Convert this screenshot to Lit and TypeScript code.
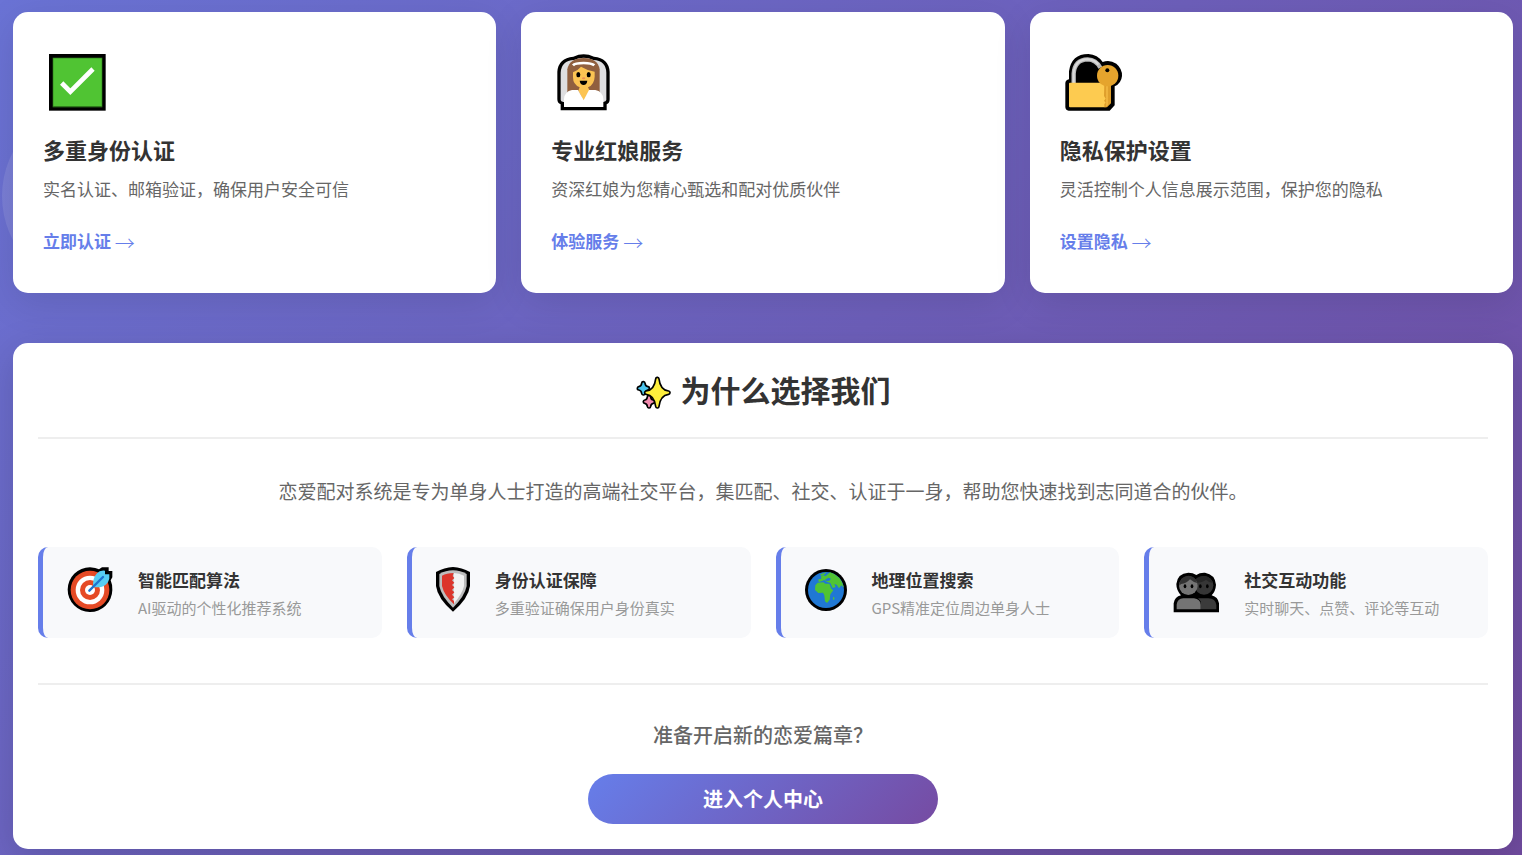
import { LitElement, html, css, svg } from "lit";
import { customElement } from "lit/decorators.js";

const checkIcon = html`<svg class="card-icon" viewBox="129 126 240 240" aria-hidden="true">
  <rect x="147" y="162" width="170" height="170" fill="#000"/>
  <rect x="158" y="173" width="149" height="149" fill="#2f7a1c"/>
  <rect x="160" y="175" width="145" height="143" fill="#50c433"/>
  <path d="M185 249 L211 275 L279 207" fill="none" stroke="#fff" stroke-width="14"/>
</svg>`;

const brideIcon = html`<svg class="card-icon" viewBox="33 6 240 240" aria-hidden="true">
  <path d="M62 211 V193 Q52 190 52 178 V95 Q55 54 100 50 Q131 36 162 50 Q206 54 209 95 V178 Q209 190 200 193 V211 Z" fill="#000"/>
  <path d="M62 180 V98 Q64 62 102 60 Q131 46 160 60 Q198 62 199 98 V180 Q198 185 190 186 H70 Q62 185 62 180 Z" fill="#dedee0"/>
  <path d="M82 170 V88 Q88 55 131 54 Q174 55 179 88 V170 Z" fill="#91603f"/>
  <path d="M99 97 Q112 93 123 80 Q143 92 164 95 V110 Q163 134 144 142 L149 152 L131 182 L115 152 L119 142 Q99 134 99 112 Z" fill="#fcc453"/>
  <path d="M72 201 V177 Q74 154 96 150 L114 150 L131 181 L147 150 L166 150 Q188 154 190 177 V201 Z" fill="#fff"/>
  <path d="M99 76 Q105 69 131 69 Q155 69 163 76" fill="none" stroke="#fff" stroke-width="8"/>
  <ellipse cx="115" cy="104" rx="6" ry="8"/><ellipse cx="146" cy="104" rx="6" ry="8"/>
  <ellipse cx="131" cy="115" rx="5" ry="3" fill="#ef8d55"/>
  <path d="M119 122 H142 Q140 135 131 135 Q121 135 119 122Z"/>
</svg>`;

const lockIcon = html`<svg class="card-icon" viewBox="29 6 240 240" aria-hidden="true">
  <path d="M55 212 Q45 210 45 201 V129 Q46 120 56 118 V94 Q63 42 114 42 Q142 44 157 66 Q178 58 198 71 Q216 86 215 108 Q213 130 193 139 V196 L178 212 Z" fill="#000"/>
  <path d="M70 136 V101 Q73 59 112 58 Q137 59 150 83" fill="none" stroke="#b9b9b9" stroke-width="13"/>
  <path d="M70 132 V101 Q73 59 112 58 Q133 59 144 74" fill="none" stroke="#dadada" stroke-width="6"/>
  <rect x="56" y="128" width="112" height="74" rx="3" fill="#fdcb50"/>
  <path d="M162 130 H182 V190 L170 202 H162 V192 L166 188 L161 182 L166 176 L161 168Z" fill="#df9f2c"/>
  <path d="M167 132 H173 V195 L167 200Z" fill="#efb33d"/>
  <circle cx="172" cy="107" r="32" fill="#e5a42d"/>
  <circle cx="171" cy="91" r="6"/>
</svg>`;

const star = (x: number, y: number, rx: number, ry: number, fill: string) => {
  const k = rx * 0.12;
  const d = `M${x} ${y - ry} Q${x + k} ${y - k} ${x + rx} ${y} Q${x + k} ${y + k} ${x} ${y + ry} Q${x - k} ${y + k} ${x - rx} ${y} Q${x - k} ${y - k} ${x} ${y - ry}Z`;
  return svg`<path d=${d} fill="#000" stroke="#000" stroke-width="15" stroke-linejoin="round"/><path d=${d} fill=${fill} stroke=${fill} stroke-width="5" stroke-linejoin="round"/>`;
};

const sparkleIcon = html`<svg class="sparkle" viewBox="109 31 105 117" aria-hidden="true">
  ${star(131, 86, 13, 15, "#4cc5ee")}
  ${star(148, 126, 12, 14, "#f48cb0")}
  ${star(173, 99, 33, 41, "#fdee3c")}
</svg>`;

const targetIcon = html`<svg class="i46" viewBox="111 81 138 138" aria-hidden="true">
  <path d="M180 82 Q198 83 207 88 L216 82 H236 V93 H247 V112 L242 121 Q248 135 247 150 A67 67 0 1 1 180 82Z"/>
  <circle cx="180" cy="150" r="58" fill="#e54a25"/>
  <circle cx="180" cy="150" r="43" fill="#fff"/>
  <circle cx="180" cy="150" r="30" fill="#e54a25"/>
  <circle cx="180" cy="150" r="15" fill="#fff"/>
  <path d="M190 141 Q186 116 201 100 Q209 90 225 92 V103 H238 V116 Q233 134 216 140 Q203 143 190 141Z" fill="#56cdf3"/>
  <path d="M178 152 L219 111" stroke="#1e73cf" stroke-width="7" stroke-linecap="round"/>
</svg>`;

const shieldIcon = html`<svg class="i34" viewBox="108 81 102 138" aria-hidden="true">
  <path d="M159 81 Q185 82 210 96 V138 Q205 176 159 215 Q113 176 108 138 V96 Q133 82 159 81Z"/>
  <path d="M159 91 Q181 91 200 102 V138 Q194 169 159 203 Q124 169 118 138 V102 Q137 91 159 91Z" fill="#bdbdbd"/>
  <path d="M161 99 Q178 99 192 107 V138 Q187 162 161 191Z" fill="#f2f2f2"/>
  <path d="M161 99 Q140 99 126 107 V138 Q132 165 162 193 V183 L156 178 L163 172 L156 164 L163 157 L156 150 L163 142 L156 135 L163 128 L156 121 L163 114 L158 108Z" fill="#dc352b"/>
</svg>`;

const globeIcon = html`<svg class="i42" viewBox="105 81 126 138" aria-hidden="true">
  <circle cx="168" cy="150" r="63"/>
  <circle cx="168" cy="150" r="54" fill="#2078d4"/>
  <path d="M136 136 L143 128 L160 127 L166 131 L178 131 L184 146 L190 151 L181 163 L179 179 L171 189 L165 184 L163 166 L159 158 L145 159 L135 150Z" fill="#50c433"/>
  <path d="M146 126 L145 118 L154 117 L153 110 L160 105 L166 109 L180 97 Q212 106 222 143 L214 136 L207 145 L200 134 L193 132 L197 141 L188 144 L181 129 L170 125 L163 120 L154 124Z" fill="#50c433"/>
  <path d="M153 108 L151 103 L169 97 L164 103Z" fill="#50c433"/>
  <path d="M165 119 L175 113 L183 116 L178 122 L169 123Z" fill="#2078d4"/>
  <ellipse cx="191" cy="175" rx="2" ry="5" fill="#50c433"/>
</svg>`;

const peopleIcon = html`<svg class="i46" viewBox="99 81 138 138" aria-hidden="true">
  <path d="M101 217 V190 Q104 170 123 166 Q109 151 109 132 Q112 100 145 98 Q159 98 169 105 Q180 97 195 98 Q225 103 228 134 Q227 153 215 166 Q234 171 237 190 V217Z"/>
  <circle cx="192" cy="136" r="28" fill="#363636"/>
  <path d="M166 119 Q175 107 194 108 Q214 112 219 129 Q204 126 198 119 Q188 128 168 128Z" fill="#262626"/>
  <circle cx="145" cy="137" r="28" fill="#747474"/>
  <path d="M118 137 Q119 109 145 107 Q165 107 172 129 Q160 127 150 118 Q140 130 123 132Z" fill="#323232"/>
  <path d="M182 208 V184 L174 175 H205 Q227 176 229 195 V208Z" fill="#3b3b3b"/>
  <path d="M110 208 V194 Q112 176 130 175 H162 Q181 177 182 194 V208Z" fill="#747474"/>
  <ellipse cx="135" cy="139" rx="4" ry="6"/><ellipse cx="156" cy="139" rx="4" ry="6"/>
  <ellipse cx="181" cy="139" rx="4" ry="6"/><ellipse cx="202" cy="139" rx="4" ry="6"/>
</svg>`;

const cards = [
  { icon: checkIcon, title: "多重身份认证", text: "实名认证、邮箱验证，确保用户安全可信", link: "立即认证" },
  { icon: brideIcon, title: "专业红娘服务", text: "资深红娘为您精心甄选和配对优质伙伴", link: "体验服务" },
  { icon: lockIcon, title: "隐私保护设置", text: "灵活控制个人信息展示范围，保护您的隐私", link: "设置隐私" },
];

const features = [
  { icon: targetIcon, title: "智能匹配算法", text: "AI驱动的个性化推荐系统" },
  { icon: shieldIcon, title: "身份认证保障", text: "多重验证确保用户身份真实" },
  { icon: globeIcon, title: "地理位置搜索", text: "GPS精准定位周边单身人士" },
  { icon: peopleIcon, title: "社交互动功能", text: "实时聊天、点赞、评论等互动" },
];

@customElement("app-root")
export class AppRoot extends LitElement {
  static styles = css`
    :host {
      display: block;
      position: relative;
      overflow: hidden;
      min-height: 100vh;
      box-sizing: border-box;
      padding: 12px 9px 6px 13px;
      background: linear-gradient(135deg, #6a73d5 0%, #704b9f 100%);
      font-family: "Noto Sans CJK SC", sans-serif;
      color: #333;
    }
    h2, h3, h4, p { margin: 0; }
    svg { display: block; flex: none; }
    .bubble {
      position: absolute;
      left: 2px;
      top: 101px;
      width: 190px;
      height: 190px;
      border-radius: 50%;
      background: rgba(255, 255, 255, 0.1);
    }
    main { position: relative; max-width: 1500px; margin: 0 auto; }
    .cards {
      display: grid;
      grid-template-columns: repeat(3, 1fr);
      gap: 25px;
      margin-bottom: 50px;
    }
    .card, .panel {
      background: #fff;
      border-radius: 15px;
      box-shadow: 0 10px 38px rgba(0, 0, 0, 0.15);
    }
    .card { padding: 30px; box-shadow: 0 10px 38px rgba(0, 0, 0, 0.1); }
    .card-icon { width: 80px; height: 80px; margin-bottom: 12px; }
    .card h3 { font-size: 22px; line-height: 30px; margin-bottom: 12px; }
    .card p { font-size: 17px; line-height: 26px; color: #666; margin-bottom: 26px; }
    .card a {
      display: block;
      font-size: 17px;
      line-height: 26px;
      margin-bottom: 9px;
      font-weight: 700;
      color: #667eea;
      text-decoration: none;
    }
    .arrow { font-size: 20px; line-height: 20px; font-weight: 300; vertical-align: middle; }
    .panel { padding: 25px; text-align: center; }
    .panel h2 {
      display: flex;
      justify-content: center;
      align-items: center;
      gap: 10px;
      font-size: 30px;
      line-height: 42px;
      padding-bottom: 27px;
      border-bottom: 2px solid #eee;
    }
    .sparkle { width: 35px; height: 39px; }
    .intro { font-size: 19px; line-height: 34px; color: #666; margin: 35px 0 39px; }
    .features {
      display: grid;
      grid-template-columns: repeat(4, 1fr);
      gap: 25px;
      text-align: left;
    }
    .feature {
      display: flex;
      align-items: flex-start;
      gap: 25px;
      padding: 20px 20px 19px 24px;
      border-left: 5px solid #667eea;
      border-radius: 10px;
      background: #f8f9fb;
    }
    .i46 { width: 46px; height: 46px; }
    .i42 { width: 42px; height: 46px; }
    .i34 { width: 34px; height: 46px; }
    .feature h4 { font-size: 17px; line-height: 26px; margin-bottom: 4px; }
    .feature p { font-size: 15px; line-height: 22px; color: #999; }
    .cta { margin-top: 45px; border-top: 2px solid #eee; padding-top: 35px; }
    .cta p { font-size: 20px; line-height: 30px; font-weight: 500; color: #666; margin-bottom: 24px; }
    .cta button {
      width: 350px;
      height: 50px;
      display: block;
      margin: 0 auto;
      padding: 0;
      border: 0;
      border-radius: 25px;
      font: 700 20px/30px "Noto Sans CJK SC", sans-serif;
      color: #fff;
      background: linear-gradient(135deg, #667eea, #764ba2);
    }
  `;

  render() {
    return html`
      <div class="bubble"></div>
      <main lang="zh-CN">
        <section class="cards">
          ${cards.map((c) => html`<article class="card">
            ${c.icon}
            <h3>${c.title}</h3>
            <p>${c.text}</p>
            <a href="#">${c.link} <span class="arrow">→</span></a>
          </article>`)}
        </section>
        <section class="panel">
          <h2>${sparkleIcon}<span>为什么选择我们</span></h2>
          <p class="intro">恋爱配对系统是专为单身人士打造的高端社交平台，集匹配、社交、认证于一身，帮助您快速找到志同道合的伙伴。</p>
          <div class="features">
            ${features.map((f) => html`<div class="feature">
              ${f.icon}
              <div><h4>${f.title}</h4><p>${f.text}</p></div>
            </div>`)}
          </div>
          <div class="cta">
            <p>准备开启新的恋爱篇章？</p>
            <button type="button">进入个人中心</button>
          </div>
        </section>
      </main>
    `;
  }
}
